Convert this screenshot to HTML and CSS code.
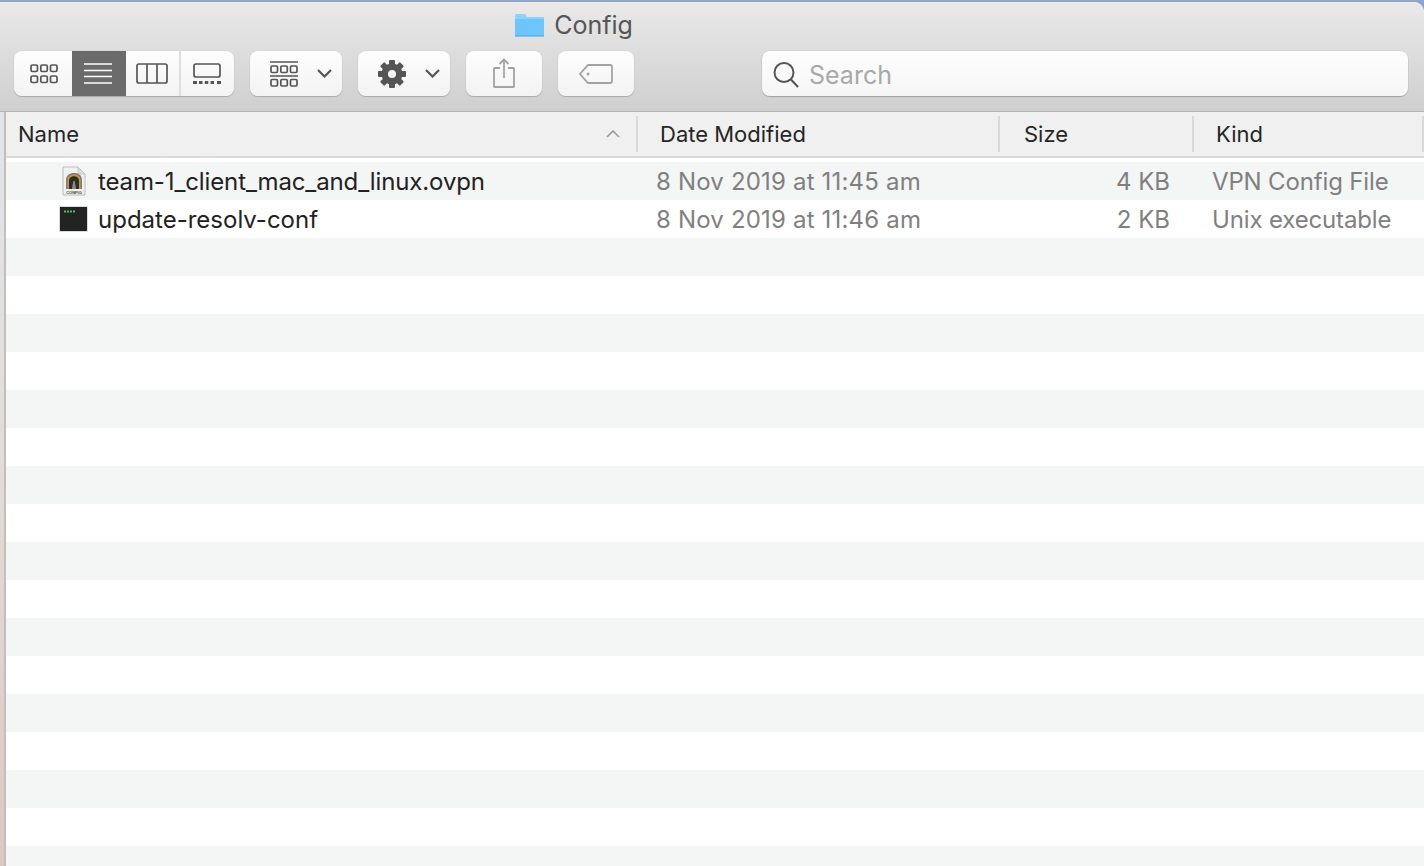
FILE: index.html
```html
<!DOCTYPE html>
<html lang="en">
<head>
  <meta charset="UTF-8" />
  <meta name="viewport" content="width=device-width, initial-scale=1.0"/>
  <title>Config</title>
  <link rel="stylesheet" href="styles.css">
</head>
<body>
  <div class="window">
    <header class="toolbar">
      <div class="title">
        <svg class="folder" width="31" height="24" viewBox="0 0 31 24">
          <path d="M1 4V2.500C1 1.500 1.600 1 2.500 1H10c.8 0 1.200.3 1.700 1L13 4z" fill="#8ed2f6"/>
          <path d="M1 5.500C1 4.500 1.600 4 2.500 4H28.500C29.500 4 30 4.500 30 5.500V22c0 .8-.5 1.300-1.500 1.300H2.500C1.500 23.300 1 22.800 1 22z" fill="#6cc6fb"/>
          <path d="M1 5h29" stroke="#a6e0fb" stroke-width="1"/>
          <path d="M1 23h29" stroke="#4fa5da" stroke-width="1"/>
        </svg>
        <span>Config</span>
      </div>
      <div class="controls">
        <div class="btn views">
          <div class="seg seg-first">
            <svg width="28" height="20" viewBox="0 0 28 20" fill="none" stroke="#555" stroke-width="1.700">
              <rect x="1" y="1" width="6.500" height="6.500" rx="1.500"/><rect x="10.800" y="1" width="6.500" height="6.500" rx="1.500"/><rect x="20.500" y="1" width="6.500" height="6.500" rx="1.500"/>
              <rect x="1" y="12" width="6.500" height="6.500" rx="1.500"/><rect x="10.800" y="12" width="6.500" height="6.500" rx="1.500"/><rect x="20.500" y="12" width="6.500" height="6.500" rx="1.500"/>
            </svg>
          </div>
          <div class="seg seg-active">
            <svg width="28" height="21" viewBox="0 0 28 21" fill="none" stroke="#fff" stroke-width="1.500">
              <path d="M0 1h28M0 7.500h28M0 13.500h28M0 20h28"/>
            </svg>
          </div>
          <div class="seg">
            <svg width="32" height="21" viewBox="0 0 32 21" fill="none" stroke="#555" stroke-width="1.700">
              <rect x="1" y="1" width="30" height="19" rx="2"/><path d="M11 1v19M21 1v19"/>
            </svg>
          </div>
          <div class="seg seg-last">
            <svg width="28" height="21" viewBox="0 0 28 21" fill="none" stroke="#555" stroke-width="1.700">
              <rect x="1" y="1" width="26" height="13" rx="2"/>
              <path d="M0 19.500h4M6 19.500h3.500M11.800 19.500h3.500M17.500 19.500h3.500M24 19.500h4" stroke-width="3"/>
            </svg>
          </div>
        </div>
        <div class="btn btn-menu">
          <svg width="28" height="26" viewBox="0 0 28 26" fill="none" stroke="#555" stroke-width="1.700">
            <path d="M0 1h28M0 15h28"/>
            <rect x="1" y="5" width="6.500" height="6.500" rx="1.200"/><rect x="10.800" y="5" width="6.500" height="6.500" rx="1.200"/><rect x="20.500" y="5" width="6.500" height="6.500" rx="1.200"/>
            <rect x="1" y="18.500" width="6.500" height="6.500" rx="1.200"/><rect x="10.800" y="18.500" width="6.500" height="6.500" rx="1.200"/><rect x="20.500" y="18.500" width="6.500" height="6.500" rx="1.200"/>
          </svg>
          <svg class="chevron" width="15" height="9" viewBox="0 0 15 9" fill="none" stroke="#555" stroke-width="2.200"><path d="M1 1l6.500 6.500L14 1"/></svg>
        </div>
        <div class="btn btn-menu">
          <svg width="28" height="28" viewBox="0 0 28 28">
            <g fill="#555">
              <rect x="11" y="0" width="6" height="28" rx="1"/>
              <rect x="11" y="0" width="6" height="28" rx="1" transform="rotate(45 14 14)"/>
              <rect x="11" y="0" width="6" height="28" rx="1" transform="rotate(90 14 14)"/>
              <rect x="11" y="0" width="6" height="28" rx="1" transform="rotate(135 14 14)"/>
              <circle cx="14" cy="14" r="10.500"/>
            </g>
            <circle cx="14" cy="14" r="4" fill="#f7f7f7"/>
          </svg>
          <svg class="chevron" width="15" height="9" viewBox="0 0 15 9" fill="none" stroke="#555" stroke-width="2.200"><path d="M1 1l6.500 6.500L14 1"/></svg>
        </div>
        <div class="btn btn-small">
          <svg class="share-icon" width="22" height="30" viewBox="0 0 22 30" fill="none" stroke="#a3a3a3" stroke-width="1.800">
            <path d="M7 10H1.500C1.200 10 1 10.200 1 10.500V28.500C1 28.800 1.200 29 1.500 29H20.500C20.800 29 21 28.800 21 28.500V10.500C21 10.200 20.800 10 20.500 10H15"/>
            <path d="M11 20V1.500M6.500 6L11 1.500 15.500 6"/>
          </svg>
        </div>
        <div class="btn btn-small">
          <svg width="34" height="20" viewBox="0 0 34 20" fill="none" stroke="#a3a3a3" stroke-width="1.800">
            <path d="M9 1H31C32.200 1 33 1.800 33 3V17C33 18.200 32.200 19 31 19H9L1 10z"/>
            <circle cx="9" cy="10" r="1.500" fill="#a3a3a3" stroke="none"/>
          </svg>
        </div>
        <div class="search">
          <svg class="search-icon" width="26" height="26" viewBox="0 0 26 26" fill="none" stroke="#555" stroke-width="2">
            <circle cx="11" cy="10.500" r="9.500"/><path d="M18 17.500l7 7.500"/>
          </svg>
          <span>Search</span>
        </div>
      </div>
    </header>

    <div class="body">
      <div class="strip"></div>
      <main class="list">
        <div class="cols list-head">
          <div class="head-cell head-name">Name
            <svg width="14" height="8" viewBox="0 0 14 8" fill="none" stroke="#9a9a9a" stroke-width="1.600"><path d="M1 7l6-6 6 6"/></svg>
          </div>
          <div class="head-cell">Date Modified</div>
          <div class="head-cell head-size">Size</div>
          <div class="head-cell">Kind</div>
        </div>
        <div class="rows">
          <div class="cols row">
            <div class="cell-name">
              <span class="icon-slot">
                <svg class="doc-icon" width="24" height="30" viewBox="0 0 24 30">
                  <path d="M1 1H16L23 8V29H1z" fill="#f1f1f1" stroke="#bdbdbd"/>
                  <path d="M16 1V8H23z" fill="#dcdcdc" stroke="#bdbdbd" stroke-width=".6"/>
                  <path d="M4 23V14C4 9.500 7.500 7 12 7S20 9.500 20 14V23z" fill="#7c7c7c"/>
                  <path d="M5.500 23V14C5.500 10.500 8.500 8.500 12 8.500S18.500 10.500 18.500 14V23z" fill="#c89a2e"/>
                  <path d="M7 23V14.500C7 12 9.300 10.200 12 10.200S17 12 17 14.500V23z" fill="#2d2d2d"/>
                  <path d="M10 23L11.300 15H12.700L14 23z" fill="#8a8a8a"/>
                  <text x="12" y="28" class="config-label">CONFIG</text>
                </svg>
              </span>
              <span class="file-name">team-1_client_mac_and_linux.ovpn</span>
            </div>
            <div class="cell-date">8 Nov 2019 at 11:45 am</div>
            <div class="cell-size">4 KB</div>
            <div class="cell-kind">VPN Config File</div>
          </div>
          <div class="cols row">
            <div class="cell-name">
              <span class="icon-slot">
                <svg width="29" height="26" viewBox="0 0 29 26">
                  <rect x="0" y="0" width="29" height="26" rx="1" fill="#d5dbe0"/>
                  <rect x="1.500" y="1.500" width="26" height="23" fill="#232323" stroke="#0c0c0c" stroke-width=".8"/>
                  <path d="M5 5.500h2M8 5.500h2M11 5.500h2M14 5.500h2" stroke="#35c85a" stroke-width="2"/>
                </svg>
              </span>
              <span>update-resolv-conf</span>
            </div>
            <div class="cell-date">8 Nov 2019 at 11:46 am</div>
            <div class="cell-size">2 KB</div>
            <div class="cell-kind">Unix executable</div>
          </div>
          <div class="row"></div><div class="row"></div><div class="row"></div>
          <div class="row"></div><div class="row"></div><div class="row"></div>
          <div class="row"></div><div class="row"></div><div class="row"></div>
          <div class="row"></div><div class="row"></div><div class="row"></div>
          <div class="row"></div><div class="row"></div><div class="row"></div>
          <div class="row"></div><div class="row"></div>
        </div>
      </main>
    </div>
  </div>
</body>
</html>
```

FILE: styles.css
```css
html, body {
  margin: 0;
  padding: 0;
  height: 100%;
  overflow: hidden;
}

body {
  background: #8fa6c6;
  font-family: Inter, "Liberation Sans", sans-serif;
  color: #222;
}

.window {
  height: 864px;
  margin-top: 2px;
  display: flex;
  flex-direction: column;
  background: #fff;
  border-top-right-radius: 10px;
  overflow: hidden;
}

/* toolbar */
.toolbar {
  height: 110px;
  box-sizing: border-box;
  flex: none;
  background: linear-gradient(#e9e9e9, #cfcfcf);
  border-bottom: 1px solid #b4b4b4;
}

.title {
  height: 49px;
  padding: 0 278px 3px 0;
  box-sizing: border-box;
  display: flex;
  justify-content: center;
  align-items: center;
  gap: 9px;
  font-size: 25px;
  color: #565656;
}

.folder {
  margin-left: 1px;
}

.controls {
  display: flex;
  padding: 0 16px 0 14px;
  height: 45px;
}

.btn {
  height: 45px;
  box-sizing: border-box;
  margin-right: 16px;
  display: flex;
  align-items: center;
  background: linear-gradient(#fdfdfd, #f3f3f3);
  border-radius: 8px;
  box-shadow: 0 1px 1px #a8a8a8, 0 0 0 .5px #d2d2d2;
}

.views {
  width: 220px;
  overflow: hidden;
}

.seg {
  height: 100%;
  width: 53px;
  display: flex;
  align-items: center;
  justify-content: center;
  box-sizing: border-box;
}

.seg-first {
  width: 58px;
  padding-left: 2px;
}

.seg-active {
  width: 54px;
  background: #6b6b6b;
  padding-right: 2px;
}

.seg-active + .seg {
  padding-right: 2px;
}

.seg-last {
  width: 55px;
  border-left: 2px solid #dedede;
  padding-right: 2px;
}

.btn-menu {
  width: 92px;
  padding-left: 20px;
  gap: 19px;
}

.btn-small {
  width: 76px;
  justify-content: center;
}

.share-icon {
  margin-top: -1px;
}

.search {
  margin-left: 112px;
  flex: 1;
  height: 45px;
  box-sizing: border-box;
  padding: 2px 0 0 11px;
  display: flex;
  align-items: center;
  gap: 10px;
  background: linear-gradient(#fdfdfd, #f6f6f6);
  border-radius: 8px;
  box-shadow: 0 1px 1px #a0a0a0, 0 0 0 .5px #c8c8c8;
  font-size: 25px;
  color: #a9a9a9;
}

.search-icon {
  margin-top: 1px;
}

/* file list */
.body {
  flex: 1;
  display: flex;
  min-height: 0;
}

.strip {
  width: 4px;
  flex: none;
  background: linear-gradient(#e1e5ea, #e0dcd9 50%, #d8cabf);
  border-right: 2px solid #c4bdb8;
}

.list {
  flex: 1;
  min-width: 0;
}

.cols {
  display: grid;
  grid-template-columns: 632px 362px 194px 230px;
}

.list-head {
  height: 44px;
  background: #f0f0f0;
  border-bottom: 2px solid #dadada;
  font-size: 22px;
  color: #262626;
}

.head-cell {
  display: flex;
  align-items: center;
  padding-left: 22px;
  margin: 4px 0;
  border-right: 2px solid #d9d9d9;
}

.head-name {
  padding-left: 12px;
  justify-content: space-between;
  padding-right: 16px;
}

.head-size {
  padding-left: 24px;
}

.rows {
  padding-top: 4px;
}

.row {
  height: 38px;
  align-items: center;
  font-size: 24px;
}

.row:nth-child(odd) {
  background: #f4f5f5;
}

.cell-name {
  display: flex;
  align-items: center;
  color: #222;
}

.icon-slot {
  width: 92px;
  display: flex;
  justify-content: flex-end;
  padding-right: 10px;
  box-sizing: border-box;
}

.doc-icon {
  margin-right: 2px;
}

.file-name {
  letter-spacing: -0.12px;
}

.config-label {
  font-family: "Liberation Sans", sans-serif;
  font-size: 4px;
  font-weight: bold;
  text-anchor: middle;
  fill: #444;
}

.cell-date {
  padding-left: 18px;
  color: #808080;
  letter-spacing: 0.18px;
}

.cell-size {
  text-align: right;
  padding-right: 24px;
  color: #808080;
}

.cell-kind {
  padding-left: 18px;
  color: #808080;
  white-space: nowrap;
  letter-spacing: -0.15px;
}
```
